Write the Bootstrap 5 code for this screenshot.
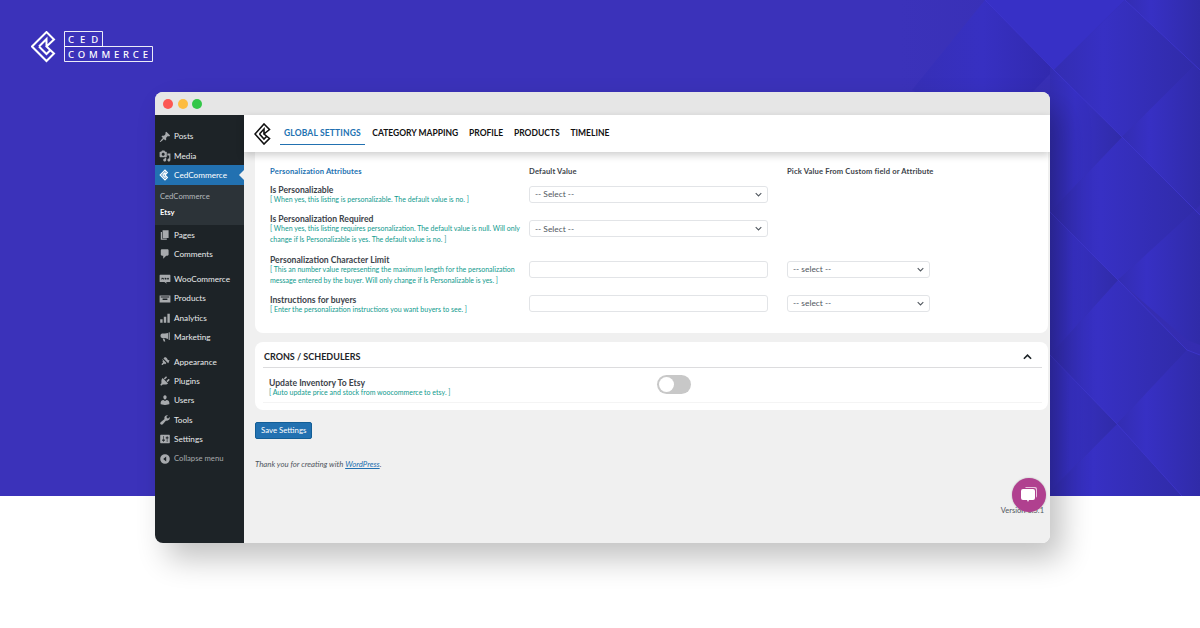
<!DOCTYPE html>
<html lang="en">
<head>
    <meta charset="UTF-8">
    <title>CedCommerce Etsy Settings</title>
    <link rel="stylesheet" href="https://cdn.jsdelivr.net/npm/bootstrap@5.3.0/dist/css/bootstrap.min.css">
    <style>
        html, body {
            height: 628px;
            overflow: hidden;
        }
        body {
            background: #fff;
            font-family: Lato, "Noto Sans", sans-serif;
            position: relative;
        }
        .hero-band {
            height: 496px;
            background: #3b32ba;
            padding: 31px 0 0 31px;
            position: relative;
            overflow: hidden;
        }
        .hero-shapes {
            position: absolute;
            top: 0;
            left: 0;
        }
        .brand-logo {
            position: relative;
            display: block;
        }
        .app-window {
            position: absolute;
            left: 155px;
            top: 92px;
            width: 895px;
            height: 451px;
            border-radius: 8px;
            overflow: hidden;
            background: #f0f0f0;
            display: flex;
            flex-direction: column;
        }
        .window-shadow {
            position: absolute;
            left: 155px;
            top: 92px;
            width: 895px;
            height: 451px;
            border-radius: 8px;
            box-shadow: 12px 16px 30px rgba(0, 0, 0, .24);
        }
        .title-bar {
            height: 23px;
            background: #e6e6e6;
            padding-left: 8px;
            gap: 4.5px;
            flex: none;
        }
        .win-dot {
            width: 10px;
            height: 10px;
            border-radius: 50%;
        }
        .app-body {
            flex: 1;
            min-height: 0;
        }
        .wp-menu {
            width: 89px;
            background: #1d2327;
            padding-top: 12px;
            flex: none;
        }
        .wp-item {
            height: 19.2px;
            padding-left: 4px;
            font-size: 8.2px;
            color: #e8eaeb;
            gap: 3px;
            white-space: nowrap;
        }
        .wp-item svg {
            width: 12px;
            height: 12px;
            fill: #a7aaad;
            flex: none;
        }
        .wp-gap {
            height: 6px;
        }
        .wp-current {
            height: 20px;
            background: #2271b1;
            color: #fff;
            position: relative;
        }
        .wp-current::after {
            content: "";
            position: absolute;
            right: 0;
            top: 5px;
            border: 5px solid transparent;
            border-right-color: #f0f0f0;
            border-left: 0;
        }
        .wp-submenu {
            background: #2c3338;
            padding: 3px 0 5px 5px;
            font-size: 7.7px;
            color: #b4b9be;
            line-height: 16px;
        }
        .wp-submenu strong {
            color: #fff;
        }
        .wp-collapse {
            color: #a7aaad;
            font-size: 7.7px;
            margin-top: 1px;
        }
        .main-pane {
            flex: 1;
            min-width: 0;
            position: relative;
        }
        .top-nav {
            height: 37px;
            background: #fff;
            box-shadow: 0 3px 8px rgba(0, 0, 0, .2);
            padding-left: 10px;
            position: relative;
            z-index: 2;
        }
        .top-nav a {
            font-size: 8.5px;
            font-weight: 700;
            color: #111;
            text-decoration: none;
            white-space: nowrap;
            padding: 0 0 5px;
            margin-top: 5px;
            border-bottom: 1px solid transparent;
        }
        .top-nav a.on {
            color: #2271b1;
            border-bottom-color: #2271b1;
            padding: 0 4px 5px;
            letter-spacing: .15px;
            margin-right: -3.3px;
        }
        .top-nav .nav-links {
            margin-left: 6px;
            gap: 10.8px;
        }
        .panel-box {
            background: #fff;
            border-radius: 0 0 8px 8px;
            margin: 0 2px 0 11px;
            height: 181px;
            padding: 14px 15px 0;
        }
        .attr-table {
            display: grid;
            grid-template-columns: 259px 258px 1fr;
            row-gap: 7.2px;
            align-items: center;
        }
        .head-cell {
            font-size: 7.6px;
            font-weight: 700;
            color: #3c434a;
            height: 10px;
            line-height: 10px;
            letter-spacing: .16px;
            white-space: nowrap;
        }
        .head-cell.blue {
            color: #2271b1;
        }
        .attr-name {
            font-size: 8.6px;
            font-weight: 700;
            color: #3c434a;
            line-height: 13px;
            padding-top: 1px;
            margin-bottom: -3px;
        }
        .attr-note {
            font-size: 7px;
            color: #0f9a8e;
            line-height: 11px;
        }
        .attr-field {
            width: 239px;
            height: 17px;
            border: 1px solid #e2e4e7;
            border-radius: 3px;
            background: #fff;
            font-size: 8.4px;
            color: #50575e;
            padding: 0 5px;
        }
        .attr-field.short {
            width: 143px;
        }
        .attr-field svg {
            width: 7px;
            height: 5px;
        }
        .crons-box {
            background: #fff;
            border-radius: 8px;
            margin: 9px 2px 0 11px;
            height: 68px;
            padding: 0 6px 0 8px;
        }
        .crons-head {
            height: 26px;
            padding: 4px 10px 0 1px;
            border-bottom: 1px solid #dcdcde;
            font-size: 9px;
            font-weight: 700;
            color: #1d2327;
        }
        .crons-row {
            height: 35px;
            padding-left: 6px;
            border-bottom: 1px solid #f4f4f4;
        }
        .crons-text {
            width: 181px;
            padding-top: 3px;
        }
        .switch-off {
            width: 34px;
            height: 19px;
            border-radius: 10px;
            background: #c8c8c8;
            padding: 2px;
            margin: -2px 0 0 207px;
            flex: none;
        }
        .switch-off span {
            display: block;
            width: 15px;
            height: 15px;
            border-radius: 50%;
            background: #fff;
        }
        .save-btn {
            --bs-btn-font-size: 7.8px;
            --bs-btn-padding-x: 5px;
            --bs-btn-padding-y: 0;
            --bs-btn-bg: #2271b1;
            --bs-btn-border-color: #135e96;
            --bs-btn-border-radius: 2px;
            height: 17px;
            margin: 12px 0 0 11px;
            display: block;
        }
        .thanks {
            font-size: 7.8px;
            font-style: italic;
            color: #50575e;
            margin: 20px 0 0 11px;
        }
        .thanks a {
            color: #2271b1;
        }
        .version-text {
            position: absolute;
            right: 6px;
            bottom: 27px;
            font-size: 7.5px;
            color: #50575e;
        }
        .chat-bubble {
            position: absolute;
            left: 1012px;
            top: 478px;
            width: 34px;
            height: 34px;
            border-radius: 50%;
            background: #b0408f;
            box-shadow: 0 0 2px rgba(0, 0, 0, .25);
        }
    </style>
</head>
<body>
    <div class="hero-band">
        <svg class="hero-shapes" width="1200" height="496" viewBox="0 0 1200 496">
            <defs>
                <linearGradient id="tile">
                    <stop offset="0" stop-color="#332db2"/>
                    <stop offset=".35" stop-color="#3730c4"/>
                    <stop offset="1" stop-color="#302ba8"/>
                </linearGradient>
                <linearGradient id="topTile">
                    <stop offset="0" stop-color="#362fb6"/>
                    <stop offset=".5" stop-color="#3730c2"/>
                    <stop offset="1" stop-color="#3129ad"/>
                </linearGradient>
                <linearGradient id="leftFade">
                    <stop offset="0" stop-color="#3b32ba"/>
                    <stop offset=".5" stop-color="#3b32ba"/>
                    <stop offset="1" stop-color="#342cb0"/>
                </linearGradient>
            </defs>
            <rect x="600" width="600" height="496" fill="url(#leftFade)"/>
            <path d="M912 90 985 0l69 70-68 70z" fill="url(#topTile)"/>
            <path d="M985 0h140l-71 70z" fill="#3730c6"/>
            <g fill="url(#tile)">
                <path d="M1054 70 1125 0l70 65-73 72z"/>
                <path d="M1122 137l73-72 5 5v135l-5 5-73-73z"/>
                <path d="M1050 212l72-75 73 73-77 70z"/>
                <path d="M1118 280l77-70 5 5v130l-13-5z"/>
                <path d="M1050 355l68-75 69 70-70 74z"/>
                <path d="M1117 424l70-74 13 5v141h-18z"/>
                <path d="M1045 496l72-72 65 72z"/>
                <path d="M1054 70l-4-4v146l72-75z"/>
                <path d="M1050 212v143l68-75z"/>
                <path d="M1050 355v141h-5l72-72z"/>
                <path d="M1125 0h75v70z"/>
            </g>
            <g fill="none" stroke="#4038d2" stroke-width="1" stroke-opacity=".7">
                <path d="M985 0l69 70 68 67 73 73 5 5"/>
                <path d="M1050 212l68 68 69 70 13 5"/>
                <path d="M1050 355l67 69 65 72"/>
                <path d="M1125 0l75 70"/>
            </g>
        </svg>
        <svg class="brand-logo" width="124" height="32" viewBox="0 0 124 32" fill="none" stroke="#fff">
            <path stroke-width="2" d="M23 8.500 15.500 1 1 15.500 15.500 30 23 22.500 15.500 15.500zM8 15.500 15.500 8V15.500M8 15.500l7.500 7.500 3.500-3.500"/>
            <path stroke-width="1" stroke-opacity=".9" d="M33.500 .5h38v15h-38zM33.500 15.500h88v15h-88z"/>
            <g fill="#fff" stroke="none" font-family="Noto Sans, sans-serif" font-size="9.500" font-weight="500">
                <text x="37" y="11.500" letter-spacing="6">CED</text>
                <text x="37" y="26.500" letter-spacing="3.800">COMMERCE</text>
            </g>
        </svg>
    </div>

    <div class="window-shadow"></div>
    <div class="app-window">
        <div class="title-bar d-flex align-items-center">
            <span class="win-dot" style="background:#fc5753"></span>
            <span class="win-dot" style="background:#fdbc40"></span>
            <span class="win-dot" style="background:#33c748"></span>
        </div>
        <div class="app-body d-flex">
            <div class="wp-menu">
                <div class="wp-item d-flex align-items-center"><svg viewBox="0 0 20 20"><path d="M10.44 3.02l1.82-1.82 6.36 6.35-1.83 1.82c-1.05-.68-2.48-.57-3.41.36l-.75.75c-.92.93-1.04 2.35-.35 3.41l-1.83 1.82-2.41-2.41-2.8 2.79c-.42.42-3.38 2.71-3.8 2.29s1.86-3.39 2.28-3.81l2.79-2.79L4.1 9.36l1.83-1.82c1.05.69 2.48.57 3.4-.36l.75-.75c.93-.92 1.05-2.35.36-3.41z"/></svg>Posts</div>
                <div class="wp-item d-flex align-items-center"><svg viewBox="0 0 20 20"><path d="M13 11V4c0-.55-.45-1-1-1h-1.67L9 1H5L3.67 3H2c-.55 0-1 .45-1 1v7c0 .55.45 1 1 1h10c.55 0 1-.45 1-1zM7 4.500c1.380 0 2.500 1.120 2.500 2.500S8.380 9.500 7 9.500 4.500 8.380 4.500 7 5.620 4.500 7 4.500zM14 6h5v10.500c0 1.380-1.120 2.500-2.500 2.500S14 17.880 14 16.500s1.120-2.500 2.500-2.500c.17 0 .34.02.5.05V9h-3V6zm-4 8.050V13h2v3.500c0 1.380-1.120 2.500-2.500 2.500S7 17.880 7 16.500 8.120 14 9.500 14c.17 0 .34.02.5.05z"/></svg>Media</div>
                <div class="wp-item wp-current d-flex align-items-center"><svg viewBox="0 0 20 20"><path d="M14 6 10 2 2 10l8 8 4-4-4-4zM6 10l4-4v4M6 10l4 4 2-2" fill="none" stroke="#fff" stroke-width="2"/></svg>CedCommerce</div>
                <div class="wp-submenu">
                    <div>CedCommerce</div>
                    <strong>Etsy</strong>
                </div>
                <div class="wp-item d-flex align-items-center"><svg viewBox="0 0 20 20"><path d="M6 15V2h10v13H6zm-1 1h8v2H3V5h2v11z"/></svg>Pages</div>
                <div class="wp-item d-flex align-items-center"><svg viewBox="0 0 20 20"><path d="M5 2h9c1.100 0 2 .9 2 2v7c0 1.100-.9 2-2 2h-2l-5 5v-5H5c-1.100 0-2-.9-2-2V4c0-1.100.9-2 2-2z"/></svg>Comments</div>
                <div class="wp-gap"></div>
                <div class="wp-item d-flex align-items-center"><svg viewBox="0 0 20 20"><path fill-rule="evenodd" d="M2 3h16a1 1 0 0 1 1 1v10a1 1 0 0 1-1 1h-6l1 3-4-3H2a1 1 0 0 1-1-1V4a1 1 0 0 1 1-1zm2 5v3h1l1-1.500L7 11h1l1-3H8l-.5 1.500L6.500 8h-1L4.800 9.500 4.500 8zm7 0a1.500 1.500 0 1 0 0 3 1.500 1.500 0 0 0 0-3zm4 0a1.500 1.500 0 1 0 0 3 1.500 1.500 0 0 0 0-3z"/></svg>WooCommerce</div>
                <div class="wp-item d-flex align-items-center"><svg viewBox="0 0 20 20"><path fill-rule="evenodd" d="M1 4h18v12H1zm2 2v1.500h14V6zm3 3v2.500h8V9z"/></svg>Products</div>
                <div class="wp-item d-flex align-items-center"><svg viewBox="0 0 20 20"><path d="M2 12h4v6H2zm6-4h4v10H8zm6-5h4v15h-4z"/></svg>Analytics</div>
                <div class="wp-item d-flex align-items-center"><svg viewBox="0 0 20 20"><path d="M18 2v13l-2-.5V2.500zM15 3.500v10L10 11.500H5a4 4 0 0 1 0-7.500h5zM6 12.500h3l1.500 5H8z"/></svg>Marketing</div>
                <div class="wp-gap"></div>
                <div class="wp-item d-flex align-items-center"><svg viewBox="0 0 20 20"><path d="M14.480 11.060 7.410 3.990l1.500-1.500c.5-.56 2.300-.47 3.510.32 1.210.8 1.510 2.090 1.510 2.090s.9 1.330 1.350 2.290l1.190-.43c.56-.28 1.150.35.89.9l-1.440 3.740c-.14.32-.42.57-.78.48-.36-.1-.61-.38-.66-.82zM5.250 4.680l7.070 7.070-1.060 1.060-.53.53c-.39.39-1.030.39-1.420 0l-.68-.68-2.120 2.120c-.51.51-1.350.51-1.860 0s-.51-1.350 0-1.860L6.770 10.800l-.68-.68c-.39-.39-.39-1.030 0-1.410l.53-.53z"/></svg>Appearance</div>
                <div class="wp-item d-flex align-items-center"><svg viewBox="0 0 20 20"><path d="M13.110 4.360 9.870 7.600 8 5.730l3.240-3.240c.35-.34 1.050-.2 1.560.32.52.51.66 1.210.31 1.550zm-8 1.770.91-1.120 9.010 9.010-1.190.84c-.71.71-2.630 1.160-3.820 1.160H6.140L4.900 17.260c-.59.59-1.540.59-2.120 0-.59-.58-.59-1.530 0-2.120l1.240-1.240v-3.880c0-1.130.4-3.190 1.090-3.890zm7.260 3.970 3.240-3.240c.34-.35 1.040-.21 1.550.31.52.51.66 1.210.31 1.550l-3.240 3.250z"/></svg>Plugins</div>
                <div class="wp-item d-flex align-items-center"><svg viewBox="0 0 20 20"><path d="M10 9.250c-2.270 0-2.730-3.440-2.730-3.440C7 4.020 7.820 2 9.970 2c2.160 0 2.980 2.020 2.710 3.810 0 0-.41 3.440-2.680 3.440zm0 2.570L12.720 10c2.390 0 4.520 2.330 4.520 4.530v2.490s-3.650 1.130-7.240 1.130c-3.650 0-7.240-1.130-7.240-1.130v-2.490c0-2.250 1.940-4.480 4.480-4.480z"/></svg>Users</div>
                <div class="wp-item d-flex align-items-center"><svg viewBox="0 0 20 20"><path d="M16.680 9.770c-1.340 1.340-3.300 1.670-4.950.99l-5.410 6.520c-.99.99-2.590.99-3.580 0s-.99-2.590 0-3.570l6.520-5.420c-.68-1.650-.35-3.610.99-4.950 1.280-1.280 3.120-1.620 4.720-1.060l-2.890 2.890 2.820 2.820 2.860-2.860c.53 1.580.18 3.390-1.080 4.640z"/></svg>Tools</div>
                <div class="wp-item d-flex align-items-center"><svg viewBox="0 0 20 20"><path d="M18 16V4c0-.55-.45-1-1-1H3c-.55 0-1 .45-1 1v12c0 .55.45 1 1 1h14c.55 0 1-.45 1-1zM8 11h1c.55 0 1 .45 1 1s-.45 1-1 1H8v1.500c0 .28-.22.5-.5.5s-.5-.22-.5-.5V13H6c-.55 0-1-.45-1-1s.45-1 1-1h1V5.500c0-.28.22-.5.5-.5s.5.22.5.5V11zm5-2h-1c-.55 0-1-.45-1-1s.45-1 1-1h1V5.500c0-.28.22-.5.5-.5s.5.22.5.5V7h1c.55 0 1 .45 1 1s-.45 1-1 1h-1v5.500c0 .28-.22.5-.5.5s-.5-.22-.5-.5V9z"/></svg>Settings</div>
                <div class="wp-item wp-collapse d-flex align-items-center"><svg viewBox="0 0 20 20"><path fill-rule="evenodd" d="M10 2a8 8 0 1 1 0 16 8 8 0 0 1 0-16zm2 4-5 4 5 4z"/></svg>Collapse menu</div>
            </div>
            <div class="main-pane">
                <div class="top-nav d-flex align-items-center">
                    <svg width="20" height="22" viewBox="0 0 20 22" fill="none" stroke="#111" stroke-width="1.600"><path d="M15.500 6.500 10 1 1 11l9 10 5.500-5.500L10 11zM5.500 11 10 6v5M5.500 11l4.500 5 2.500-2.500"/></svg>
                    <div class="nav-links d-flex">
                        <a class="on" href="#">GLOBAL SETTINGS</a>
                        <a href="#">CATEGORY MAPPING</a>
                        <a href="#">PROFILE</a>
                        <a href="#">PRODUCTS</a>
                        <a href="#">TIMELINE</a>
                    </div>
                </div>
                <div class="panel-box">
                    <div class="attr-table">
                        <div class="head-cell blue">Personalization Attributes</div>
                        <div class="head-cell">Default Value</div>
                        <div class="head-cell">Pick Value From Custom field or Attribute</div>

                        <div>
                            <div class="attr-name">Is Personalizable</div>
                            <div class="attr-note">[ When yes, this listing is personalizable. The default value is no. ]</div>
                        </div>
                        <div class="attr-field d-flex align-items-center justify-content-between">-- Select --<svg viewBox="0 0 10 6" fill="none" stroke="#50575e" stroke-width="1.500"><path d="M1 1l4 4 4-4"/></svg></div>
                        <div></div>

                        <div>
                            <div class="attr-name">Is Personalization Required</div>
                            <div class="attr-note">[ When yes, this listing requires personalization. The default value is null. Will only change if Is Personalizable is yes. The default value is no. ]</div>
                        </div>
                        <div class="attr-field d-flex align-items-center justify-content-between">-- Select --<svg viewBox="0 0 10 6" fill="none" stroke="#50575e" stroke-width="1.500"><path d="M1 1l4 4 4-4"/></svg></div>
                        <div></div>

                        <div>
                            <div class="attr-name">Personalization Character Limit</div>
                            <div class="attr-note">[ This an number value representing the maximum length for the personalization message entered by the buyer. Will only change if Is Personalizable is yes. ]</div>
                        </div>
                        <div class="attr-field"></div>
                        <div class="attr-field short d-flex align-items-center justify-content-between">-- select --<svg viewBox="0 0 10 6" fill="none" stroke="#50575e" stroke-width="1.500"><path d="M1 1l4 4 4-4"/></svg></div>

                        <div>
                            <div class="attr-name">Instructions for buyers</div>
                            <div class="attr-note">[ Enter the personalization instructions you want buyers to see. ]</div>
                        </div>
                        <div class="attr-field"></div>
                        <div class="attr-field short d-flex align-items-center justify-content-between">-- select --<svg viewBox="0 0 10 6" fill="none" stroke="#50575e" stroke-width="1.500"><path d="M1 1l4 4 4-4"/></svg></div>
                    </div>
                </div>
                <div class="crons-box">
                    <div class="crons-head d-flex align-items-center justify-content-between">
                        <span>CRONS / SCHEDULERS</span>
                        <svg width="9" height="6" viewBox="0 0 10 6" fill="none" stroke="#1d2327" stroke-width="1.800"><path d="M1 5l4-4 4 4"/></svg>
                    </div>
                    <div class="crons-row d-flex align-items-center">
                        <div class="crons-text">
                            <div class="attr-name">Update Inventory To Etsy</div>
                            <div class="attr-note text-nowrap">[ Auto update price and stock from woocommerce to etsy. ]</div>
                        </div>
                        <div class="switch-off"><span></span></div>
                    </div>
                </div>
                <button class="btn btn-primary save-btn" type="button">Save Settings</button>
                <p class="thanks">Thank you for creating with <a href="#">WordPress</a>.</p>
                <div class="version-text">Version 6.5.1</div>
            </div>
        </div>
    </div>
    <div class="chat-bubble d-flex align-items-center justify-content-center">
        <svg width="18" height="18" viewBox="0 0 18 18"><path d="M6 1h9a2 2 0 0 1 2 2v7a2 2 0 0 1-1 1.700V4a2 2 0 0 0-2-2H5a2 2 0 0 1 1-1z" fill="#e9c3de"/><path d="M3 3h10a2 2 0 0 1 2 2v7a2 2 0 0 1-2 2H9l-1 2-1-2H3a2 2 0 0 1-2-2V5a2 2 0 0 1 2-2z" fill="#fff"/></svg>
    </div>
    <script src="https://cdn.jsdelivr.net/npm/bootstrap@5.3.0/dist/js/bootstrap.bundle.min.js"></script>
</body>
</html>
